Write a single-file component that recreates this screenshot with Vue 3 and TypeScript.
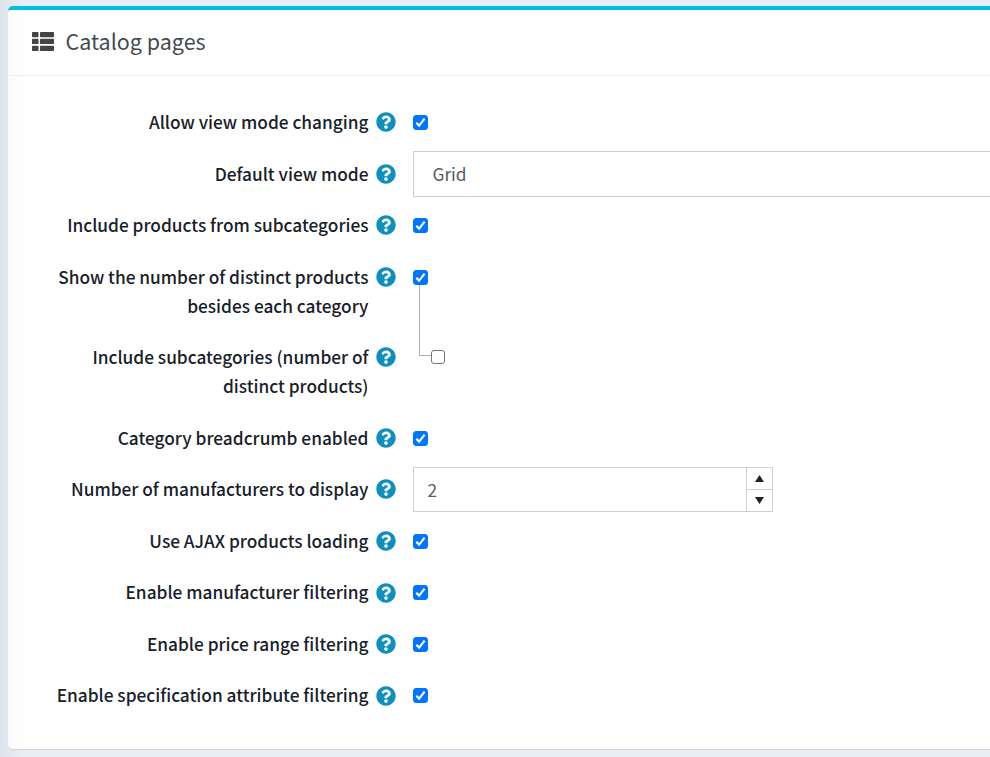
<script setup lang="ts">
import { ref } from 'vue'

interface Setting {
  label: string[]
  kind: 'check' | 'select' | 'number'
  checked?: boolean
  parent?: boolean
  nested?: boolean
}

const settings = ref<Setting[]>([
  { label: ['Allow view mode changing'], kind: 'check', checked: true },
  { label: ['Default view mode'], kind: 'select' },
  { label: ['Include products from subcategories'], kind: 'check', checked: true },
  { label: ['Show the number of distinct products', 'besides each category'], kind: 'check', checked: true, parent: true },
  { label: ['Include subcategories (number of', 'distinct products)'], kind: 'check', checked: false, nested: true },
  { label: ['Category breadcrumb enabled'], kind: 'check', checked: true },
  { label: ['Number of manufacturers to display'], kind: 'number' },
  { label: ['Use AJAX products loading'], kind: 'check', checked: true },
  { label: ['Enable manufacturer filtering'], kind: 'check', checked: true },
  { label: ['Enable price range filtering'], kind: 'check', checked: true },
  { label: ['Enable specification attribute filtering'], kind: 'check', checked: true },
])
const manufacturers = ref(2)
</script>

<template>
  <main class="page">
    <section class="card">
      <header class="card-header">
        <svg class="list-icon" viewBox="0 0 22 19" fill="#444">
          <rect x="0" y="0" width="6.5" height="5.3" rx="0.7" /><rect x="8" y="0" width="14" height="5.3" rx="0.7" />
          <rect x="0" y="6.8" width="6.5" height="5.3" rx="0.7" /><rect x="8" y="6.8" width="14" height="5.3" rx="0.7" />
          <rect x="0" y="13.7" width="6.5" height="5.3" rx="0.7" /><rect x="8" y="13.7" width="14" height="5.3" rx="0.7" />
        </svg>
        <h2 class="title">Catalog pages</h2>
      </header>
      <div class="card-body">
        <div v-for="item in settings" :key="item.label[0]" class="row">
          <div class="label">
            <span v-for="line in item.label" :key="line" class="line">{{ line }}</span>
          </div>
          <svg class="help" viewBox="0 0 512 512">
            <path fill="#0f8fbf" d="M504 256c0 136.997-111.043 248-248 248S8 392.997 8 256C8 119.083 119.043 8 256 8s248 111.083 248 248zM262.655 90c-54.497 0-89.255 22.957-116.549 63.758-3.536 5.286-2.353 12.415 2.715 16.258l34.699 26.31c5.205 3.947 12.621 3.008 16.665-2.122 17.864-22.658 30.113-35.797 57.303-35.797 20.429 0 45.698 13.148 45.698 32.958 0 14.976-12.363 22.667-32.534 33.976C247.128 238.528 216 254.941 216 296v4c0 6.627 5.373 12 12 12h56c6.627 0 12-5.373 12-12v-1.333c0-28.462 83.186-29.647 83.186-106.667 0-58.002-60.165-102-116.531-102zM256 338c-25.365 0-46 20.635-46 46 0 25.364 20.635 46 46 46s46-20.636 46-46c0-25.365-20.635-46-46-46z" />
          </svg>
          <div class="control">
            <label v-if="item.kind === 'check'" class="check" :class="{ on: item.checked, parent: item.parent, nested: item.nested }">
              <input v-model="item.checked" type="checkbox" class="native">
              <svg v-if="item.checked" class="tick" viewBox="0 0 15 15">
                <path d="M3.3 7.8l2.8 2.8 5.5-7" fill="none" stroke="#fff" stroke-width="2.1" />
              </svg>
            </label>
            <div v-else-if="item.kind === 'select'" class="select">Grid</div>
            <div v-else class="number">
              <span class="value">{{ manufacturers }}</span>
              <span class="spinner">
                <button class="spin up" @click="manufacturers++"><svg viewBox="0 0 9 7"><path d="M4.5 0L9 7H0z" fill="#222" /></svg></button>
                <button class="spin down" @click="manufacturers--"><svg viewBox="0 0 9 7"><path d="M4.5 7L0 0h9z" fill="#222" /></svg></button>
              </span>
            </div>
          </div>
        </div>
      </div>
    </section>
  </main>
</template>

<style>
body {
  overflow: hidden;
}
</style>

<style scoped>
.page {
  box-sizing: border-box;
  height: 757px;
  padding: 6px 0 0 8px;
  overflow: hidden;
  background: linear-gradient(90deg, #dfe3ec 0, #e9edf4 22px);
  font-family: "Noto Sans CJK SC", "Noto Sans", sans-serif;
}
.card {
  box-sizing: border-box;
  height: 743px;
  border-top: 4px solid #00bfe0;
  border-radius: 5px 0 0 5px;
  background: linear-gradient(90deg, #fbfbfc 0, #fff 18px);
  box-shadow: 0 1px 1px #cdd1d7;
}
.card-header {
  box-sizing: border-box;
  display: flex;
  align-items: center;
  height: 66px;
  padding: 0 0 2px 24px;
  border-bottom: 1px solid #f0f0f0;
}
.list-icon {
  width: 22px;
  height: 19px;
  margin-right: 11.5px;
}
.title {
  margin: -1px 0 0;
  color: #444b50;
  font-size: 21.5px;
  font-weight: 400;
  line-height: 32px;
}
.card-body {
  padding-top: 23px;
}
.row {
  display: flex;
  align-items: flex-start;
  box-sizing: border-box;
  min-height: 46px;
  margin-bottom: 5.53px;
}
.label {
  display: flex;
  flex-direction: column;
  align-items: flex-end;
  box-sizing: border-box;
  width: 360.5px;
  padding: 8px 0 9px;
  color: #17212a;
  font-size: 17.27px;
  font-weight: 500;
  line-height: 29px;
  white-space: nowrap;
}
.help {
  width: 20px;
  height: 20px;
  margin: 13.4px 17.5px 0 7px;
}
.control {
  flex: 1;
}
.check {
  position: relative;
  box-sizing: border-box;
  display: block;
  width: 14px;
  height: 14px;
  margin-top: 16px;
  border: 1px solid #767676;
  border-radius: 3px;
  background: #fff;
}
.check.on {
  width: 15px;
  height: 15px;
  border-color: #0075ff;
  background: #0075ff;
}
.check.nested {
  margin-left: 18px;
}
.check.parent::after {
  content: "";
  position: absolute;
  top: 14px;
  left: 5px;
  width: 11px;
  height: 70px;
  border-left: 1px solid #b0b0b0;
  border-bottom: 1px solid #b0b0b0;
}
.native {
  display: none;
}
.tick {
  position: absolute;
  top: -1px;
  left: -1px;
  width: 15px;
  height: 15px;
}
.select {
  box-sizing: border-box;
  height: 46px;
  padding-left: 18.5px;
  border: 1px solid #ccd0d4;
  border-right: 0;
  color: #555b60;
  font-size: 17.3px;
  line-height: 44px;
}
.number {
  box-sizing: border-box;
  display: flex;
  width: 360px;
  height: 45px;
  margin-top: 0.6px;
  border: 1px solid #ccd0d7;
  color: #5d5d5d;
  font-size: 17.3px;
  line-height: 44px;
}
.value {
  flex: 1;
  padding-left: 13.5px;
}
.spinner {
  display: flex;
  flex-direction: column;
  width: 25px;
  border-left: 1px solid #ccd0d7;
}
.spin {
  display: flex;
  flex: 1;
  align-items: center;
  justify-content: center;
  padding: 0;
  border: 0;
  background: none;
}
.spin.up {
  border-bottom: 1px solid #ccd0d7;
}
.spin svg {
  width: 9px;
  height: 7px;
}
</style>
